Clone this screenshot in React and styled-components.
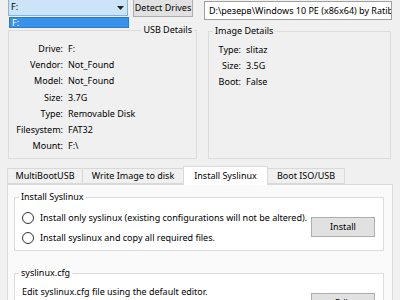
import React from 'react';
import styled, { createGlobalStyle } from 'styled-components';

const Global = createGlobalStyle`
  html, body { margin: 0; padding: 0; background: #f0f0f0; }
  body {
    font-family: "Noto Sans", "Open Sans", sans-serif;
    font-size: 9px;
    color: #000;
    overflow: hidden;
  }
  #root { width: 400px; height: 300px; overflow: hidden; }
  * { box-sizing: border-box; }
`;

const Window = styled.div`
  width: 400px;
  height: 300px;
  overflow: hidden;
  background: #f0f0f0;
  padding: 0 8px;
  display: flex;
  flex-direction: column;
`;

const TopRow = styled.div`
  position: relative;
  display: flex;
  align-items: flex-start;
  margin-top: -3px;
  height: 23px;
  flex-shrink: 0;
`;

const Combo = styled.div`
  position: relative;
  width: 120px;
  height: 19px;
  border: 1px solid #7eb4ea;
  background: #cce4f7;
  display: flex;
  align-items: center;
  padding: 0 2px;
  line-height: 12px;
`;

const ComboArrow = styled.svg`
  position: absolute;
  right: 3px;
  top: 8px;
`;

const DropList = styled.div`
  position: absolute;
  left: 0;
  top: 19px;
  width: 120px;
  height: 11px;
  background: #3892ec;
  border: 1px solid #2b79c9;
  color: #fff;
  line-height: 9px;
  padding: 0 2px;
  z-index: 5;
`;

const Button = styled.div`
  width: ${p => p.$w || 64}px;
  height: ${p => p.$h || 20}px;
  margin-left: ${p => p.$ml || 0}px;
  margin-top: ${p => p.$mt || 0}px;
  background: #e1e1e1;
  border: 1px solid #adadad;
  display: flex;
  align-items: center;
  justify-content: center;
  line-height: 12px;
  flex-shrink: 0;
`;

const PathInput = styled.div`
  flex: 1;
  height: 19px;
  margin-left: 11px;
  margin-top: 4px;
  background: #fff;
  border: 1px solid #a0a0a0;
  padding: 0 4px;
  line-height: 17px;
  white-space: nowrap;
  overflow: hidden;
`;

const Details = styled.div`
  display: grid;
  grid-template-columns: 189px 183px;
  column-gap: 11px;
  margin-top: 4px;
  flex-shrink: 0;
`;

const Group = styled.fieldset`
  margin: ${p => p.$mt || 0}px 0 0 0;
  padding: 0;
  min-width: 0;
  border: 1px solid #dcdcdc;
  background: ${p => p.$bg || 'transparent'};
  height: ${p => (p.$h ? `${p.$h}px` : 'auto')};
`;

const Legend = styled.legend`
  padding: 0 2px;
  line-height: 12px;
  margin-left: ${p => (p.$right ? 'auto' : '4px')};
  margin-right: ${p => (p.$right ? '2px' : '0')};
`;

const InfoGrid = styled.div`
  display: grid;
  grid-template-columns: ${p => p.$label}px 1fr;
  column-gap: 5px;
  grid-auto-rows: 16.2px;
  align-items: center;
  padding-top: 5px;
  line-height: 12px;
`;

const Label = styled.span`
  text-align: right;
  white-space: nowrap;
`;

const Value = styled.span`
  white-space: nowrap;
`;

const TabBar = styled.div`
  display: flex;
  align-items: flex-end;
  height: 18px;
  margin-top: 7px;
  margin-left: -1px;
  position: relative;
  z-index: 2;
  flex-shrink: 0;
`;

const Tab = styled.div`
  width: ${p => p.$w}px;
  height: ${p => (p.$active ? 19 : 16)}px;
  margin-right: -1px;
  margin-bottom: ${p => (p.$active ? -1 : 0)}px;
  border: 1px solid #d9d9d9;
  border-bottom: ${p => (p.$active ? 'none' : '1px solid #d9d9d9')};
  background: ${p => (p.$active ? '#ffffff' : '#f0f0f0')};
  display: flex;
  align-items: center;
  justify-content: center;
  padding-top: ${p => (p.$active ? 0 : 0)}px;
  line-height: 12px;
  white-space: nowrap;
  position: relative;
  z-index: ${p => (p.$active ? 2 : 1)};
`;

const Pane = styled.div`
  margin-left: -1px;
  width: 386px;
  flex: 1;
  border: 1px solid #d9d9d9;
  background: #fafafa;
  padding: 6px 8px 0 6px;
  display: flex;
  flex-direction: column;
`;

const GroupBody = styled.div`
  display: flex;
  justify-content: space-between;
  align-items: flex-start;
  padding: ${p => p.$pt}px 8px 4px 7px;
`;

const RadioList = styled.div`
  display: flex;
  flex-direction: column;
  gap: 4px;
`;

const RadioRow = styled.div`
  display: flex;
  align-items: center;
  height: 16px;
  line-height: 12px;
  white-space: nowrap;
`;

const RadioCircle = styled.span`
  width: 12px;
  height: 12px;
  border-radius: 50%;
  border: 1px solid #333;
  background: #fff;
  margin-right: 6px;
  flex-shrink: 0;
`;

const PlainText = styled.div`
  line-height: 16px;
  height: 16px;
  padding-left: 0;
  white-space: nowrap;
`;

const usb = [
  ['Drive:', 'F:'],
  ['Vendor:', 'Not_Found'],
  ['Model:', 'Not_Found'],
  ['Size:', '3.7G'],
  ['Type:', 'Removable Disk'],
  ['Filesystem:', 'FAT32'],
  ['Mount:', 'F:\\'],
];

const img = [
  ['Type:', 'slitaz'],
  ['Size:', '3.5G'],
  ['Boot:', 'False'],
];

const tabs = [
  ['MultiBootUSB', 76, false],
  ['Write Image to disk', 102, false],
  ['Install Syslinux', 85, true],
  ['Boot ISO/USB', 78, false],
];

export default function App() {
  return (
    <>
      <Global />
      <Window>
        <TopRow>
          <Combo>
            F:
            <ComboArrow width="7" height="4" viewBox="0 0 7 4">
              <path d="M0 0 L7 0 L3.5 4 Z" fill="#222" />
            </ComboArrow>
            <DropList>F:</DropList>
          </Combo>
          <Button $w={60} $h={19} $ml={5} $mt={1}>Detect Drives</Button>
          <PathInput>D:\резерв\Windows 10 PE (x86x64) by Ratiborus\WinPE10_8_Sergei_Strelec_x86_x64.iso</PathInput>
        </TopRow>

        <Details>
          <Group $h={135}>
            <Legend $right>USB Details</Legend>
            <InfoGrid $label={54}>
              {usb.map(([l, v]) => (
                <React.Fragment key={l}>
                  <Label>{l}</Label>
                  <Value>{v}</Value>
                </React.Fragment>
              ))}
            </InfoGrid>
          </Group>
          <Group $h={134} $mt={1}>
            <Legend>Image Details</Legend>
            <InfoGrid $label={32}>
              {img.map(([l, v]) => (
                <React.Fragment key={l}>
                  <Label>{l}</Label>
                  <Value>{v}</Value>
                </React.Fragment>
              ))}
            </InfoGrid>
          </Group>
        </Details>

        <TabBar>
          {tabs.map(([t, w, a]) => (
            <Tab key={t} $w={w} $active={a}>{t}</Tab>
          ))}
        </TabBar>
        <Pane>
          <Group $bg="#ffffff">
            <Legend>Install Syslinux</Legend>
            <GroupBody $pt={7}>
              <RadioList>
                <RadioRow>
                  <RadioCircle />
                  Install only syslinux (existing configurations will not be altered).
                </RadioRow>
                <RadioRow>
                  <RadioCircle />
                  Install syslinux and copy all required files.
                </RadioRow>
              </RadioList>
              <Button $w={64} $h={20} $mt={7}>Install</Button>
            </GroupBody>
          </Group>
          <Group $bg="#ffffff" $mt={16}>
            <Legend>syslinux.cfg</Legend>
            <GroupBody $pt={5}>
              <PlainText>Edit syslinux.cfg file using the default editor.</PlainText>
              <Button $w={64} $h={20} $mt={9}>Edit</Button>
            </GroupBody>
          </Group>
        </Pane>
      </Window>
    </>
  );
}
